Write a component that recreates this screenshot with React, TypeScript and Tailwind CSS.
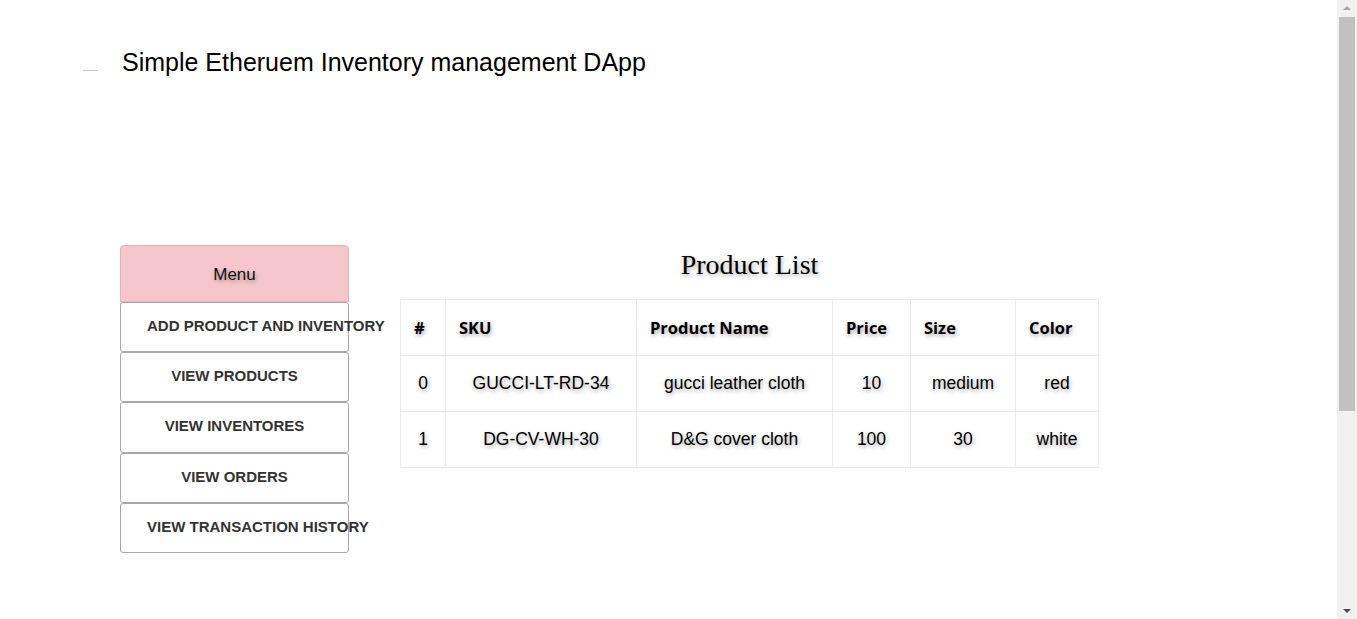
const menuItems = [
  "ADD PRODUCT AND INVENTORY",
  "VIEW PRODUCTS",
  "VIEW INVENTORES",
  "VIEW ORDERS",
  "VIEW TRANSACTION HISTORY",
];

const products = [
  { id: 0, sku: "GUCCI-LT-RD-34", name: "gucci leather cloth", price: 10, size: "medium", color: "red" },
  { id: 1, sku: "DG-CV-WH-30", name: "D&G cover cloth", price: 100, size: "30", color: "white" },
];

const shadow = "[text-shadow:1px_2px_4px_rgba(0,0,0,0.35)]";

export default function App() {
  return (
    <div className="flex h-screen w-full overflow-hidden bg-white font-['Liberation_Sans',Arial,sans-serif] text-black">
      <main className="flex-1">
        {/* Header */}
        <div className="flex items-center pt-[46px]">
          <div className="ml-[83px] mt-[16px] h-px w-[15px] bg-[#c8c8c8]" />
          <h1 className="ml-[24px] text-[25px] leading-[32px]">Simple Etheruem Inventory management DApp</h1>
        </div>

        <div className="mt-[167px] flex">
          {/* Sidebar menu */}
          <div className="ml-[120px] w-[229px] shrink-0">
            <div className="flex h-[57px] items-center justify-center rounded-t-[4px] border border-[#e6b3ba] bg-[#f5c6cb] pt-[3px] text-[17px] text-[#111] [text-shadow:1px_2px_4px_rgba(0,0,0,0.3)]">
              Menu
            </div>
            {menuItems.map((item) => (
              <div
                key={item}
                className="h-[50.2px] whitespace-nowrap rounded-[3px] border border-[#a8a8a8] px-[26px] text-center text-[15px] font-bold leading-[46px] text-[#333]"
              >
                {item}
              </div>
            ))}
          </div>

          {/* Product list */}
          <div className="ml-[51px] w-[699px]">
            <h2 className={`pt-[5px] text-center font-['Liberation_Serif','Times_New_Roman',serif] text-[28px] leading-[30px] ${shadow}`}>
              Product List
            </h2>
            <table className="mt-[19px] w-full border-collapse">
              <thead>
                <tr className={`h-[56px] text-left font-['Open_Sans','Noto_Sans',sans-serif] text-[16.5px] font-bold ${shadow}`}>
                  <th className="w-[45px] border border-[#e9ecef] px-[13px] pt-[2px]">#</th>
                  <th className="w-[191px] border border-[#e9ecef] px-[13px] pt-[2px]">SKU</th>
                  <th className="w-[196px] border border-[#e9ecef] px-[13px] pt-[2px]">Product Name</th>
                  <th className="w-[78px] border border-[#e9ecef] px-[13px] pt-[2px]">Price</th>
                  <th className="w-[105px] border border-[#e9ecef] px-[13px] pt-[2px]">Size</th>
                  <th className="border border-[#e9ecef] px-[13px] pt-[2px]">Color</th>
                </tr>
              </thead>
              <tbody>
                {products.map((p) => (
                  <tr key={p.id} className={`h-[56px] text-center text-[17.5px] ${shadow}`}>
                    <td className="border border-[#e9ecef]">{p.id}</td>
                    <td className="border border-[#e9ecef]">{p.sku}</td>
                    <td className="border border-[#e9ecef]">{p.name}</td>
                    <td className="border border-[#e9ecef]">{p.price}</td>
                    <td className="border border-[#e9ecef]">{p.size}</td>
                    <td className="border border-[#e9ecef]">{p.color}</td>
                  </tr>
                ))}
              </tbody>
            </table>
          </div>
        </div>
      </main>

      {/* Scrollbar */}
      <div className="flex w-[20px] shrink-0 flex-col items-center bg-[#f1f1f1]">
        <svg width="10" height="17" viewBox="0 0 10 17" className="shrink-0">
          <path d="M1 10 L5 6 L9 10 Z" fill="#a3a3a3" />
        </svg>
        <div className="h-[394px] w-[16px] bg-[#c1c1c1]" />
        <div className="flex-1" />
        <svg width="10" height="17" viewBox="0 0 10 17" className="shrink-0">
          <path d="M1 7 L5 11 L9 7 Z" fill="#505050" />
        </svg>
      </div>
    </div>
  );
}
